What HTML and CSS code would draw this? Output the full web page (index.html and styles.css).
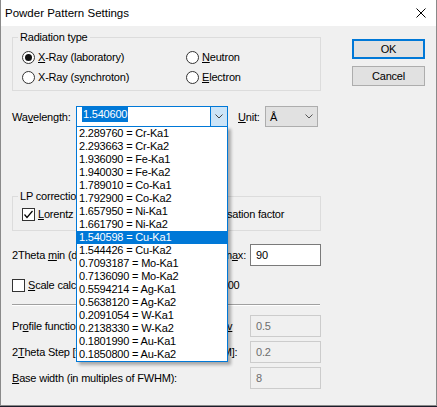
FILE: index.html
```html
<!DOCTYPE html>
<html lang="en">

<head>
    <meta charset="utf-8">
    <title>Powder Pattern Settings</title>
    <link rel="stylesheet" href="styles.css">
</head>

<body>
    <div class="dialog">
        <div class="titlebar">
            <span class="title">Powder Pattern Settings</span>
            <svg class="close" width="10" height="10" viewBox="0 0 10 10">
                <path d="M0.5 0.5 L9.5 9.5 M9.5 0.5 L0.5 9.5" stroke="#000" stroke-width="1" fill="none" />
            </svg>
        </div>

        <div class="client">
            <div class="main">
                <!-- radiation -->
                <fieldset class="group radiation">
                    <legend>Radiation type</legend>
                    <div class="options">
                        <label class="option"><span class="radio checked"></span><span><u>X</u>-Ray (laboratory)</span></label>
                        <label class="option"><span class="radio"></span><span><u>N</u>eutron</span></label>
                        <label class="option"><span class="radio"></span><span>X-Ray (s<u>y</u>nchroton)</span></label>
                        <label class="option"><span class="radio"></span><span><u>E</u>lectron</span></label>
                    </div>
                </fieldset>

                <!-- wavelength + unit -->
                <div class="wave">
                    <span class="wave-label">Wa<u>v</u>elength:</span>
                    <div class="combo focused">
                        <span class="combo-value"><span class="sel">1.540600</span></span>
                        <span class="combo-arrow">
                            <svg width="8" height="5" viewBox="0 0 8 5"><polyline points="0.5,0.5 4,4 7.5,0.5" fill="none" stroke="#444" stroke-width="1" /></svg>
                        </span>
                    </div>
                    <span class="unit-label"><u>U</u>nit:</span>
                    <div class="combo unit">
                        <span>Å</span>
                        <svg width="8" height="5" viewBox="0 0 8 5"><polyline points="0.5,0.5 4,4 7.5,0.5" fill="none" stroke="#555" stroke-width="1" /></svg>
                    </div>
                </div>

                <!-- lp correction -->
                <fieldset class="group lp">
                    <legend>LP correction</legend>
                    <div class="options">
                        <label class="option"><span class="check checked">
                                <svg width="11" height="11" viewBox="0 0 11 11"><polyline points="1.5,5.5 4,8.5 9.5,2" fill="none" stroke="#000" stroke-width="1.2" /></svg>
                            </span><span><u>L</u>orentz factor</span></label>
                        <label class="option"><span class="check checked">
                                <svg width="11" height="11" viewBox="0 0 11 11"><polyline points="1.5,5.5 4,8.5 9.5,2" fill="none" stroke="#000" stroke-width="1.2" /></svg>
                            </span><span>Polarisation factor</span></label>
                    </div>
                </fieldset>

                <div class="pair theta">
                    <div class="pair-label split">
                        <span>2Theta <u>m</u>in (deg):</span>
                        <span class="field small"></span>
                        <span class="max-label">2Theta m<u>a</u>x:</span>
                    </div>
                    <span class="field">90</span>
                </div>

                <label class="option scale"><span class="check"></span><span><u>S</u>cale calculated pattern to maximum of 1000</span></label>

                <hr class="sep">

                <div class="pair first">
                    <span class="pair-label">Pr<u>o</u>file function (pseudo-Voigt) Gauss fraction <u>v</u></span>
                    <span class="field disabled">0.5</span>
                </div>
                <div class="pair">
                    <span class="pair-label">2<u>T</u>heta Step [fraction of the peak width, FWHM]:</span>
                    <span class="field disabled">0.2</span>
                </div>
                <div class="pair">
                    <span class="pair-label"><u>B</u>ase width (in multiples of FWHM):</span>
                    <span class="field disabled">8</span>
                </div>
            </div>

            <div class="buttons">
                <button class="btn default">OK</button>
                <button class="btn">Cancel</button>
            </div>
        </div>

        <!-- open list of the wavelength combo -->
        <ul class="droplist">
            <li>2.289760 = Cr-Ka1</li>
            <li>2.293663 = Cr-Ka2</li>
            <li>1.936090 = Fe-Ka1</li>
            <li>1.940030 = Fe-Ka2</li>
            <li>1.789010 = Co-Ka1</li>
            <li>1.792900 = Co-Ka2</li>
            <li>1.657950 = Ni-Ka1</li>
            <li>1.661790 = Ni-Ka2</li>
            <li class="selected">1.540598 = Cu-Ka1</li>
            <li>1.544426 = Cu-Ka2</li>
            <li>0.7093187 = Mo-Ka1</li>
            <li>0.7136090 = Mo-Ka2</li>
            <li>0.5594214 = Ag-Ka1</li>
            <li>0.5638120 = Ag-Ka2</li>
            <li>0.2091054 = W-Ka1</li>
            <li>0.2138330 = W-Ka2</li>
            <li>0.1801990 = Au-Ka1</li>
            <li>0.1850800 = Au-Ka2</li>
        </ul>
    </div>
</body>

</html>
```

FILE: styles.css
```css
body {
    margin: 0;
    background-color: #1c1c2a;
    font-family: "Liberation Sans", Arial, sans-serif;
    font-size: 11px;
    letter-spacing: -0.2px;
    color: #000;
}

u {
    text-decoration: underline;
    text-underline-offset: 1px;
}

.dialog {
    position: relative;
    width: 435px;
    height: 405px;
    border: 1px solid #8a8a8a;
    border-top: none;
    background-color: #f0f0f0;
}

.titlebar {
    height: 26px;
    background-color: #fff;
    display: flex;
    align-items: center;
    justify-content: space-between;
    padding: 0 10px 0 4px;
}

.title {
    font-size: 11.5px;
    letter-spacing: 0;
}

.client {
    display: flex;
    padding-left: 11px;
}

.main {
    width: 309px;
    padding-top: 5px;
}

/* group boxes */
.group {
    margin: 0;
    border: 1px solid #dcdcdc;
    min-width: 0;
}

.group legend {
    padding: 0 2px;
    margin-left: -4px;
    line-height: 13px;
}

.radiation {
    padding: 7px 8px 6px 9px;
}

.lp {
    margin-top: 63px;
    padding: 5px 8px 9px 9px;
}

.options {
    display: grid;
    grid-template-columns: 164px auto;
    row-gap: 7px;
}

.lp .options {
    grid-template-columns: 162px auto;
}

.option {
    display: flex;
    align-items: center;
    gap: 3px;
    height: 13px;
    line-height: 13px;
    white-space: nowrap;
}

.radio {
    width: 13px;
    height: 13px;
    box-sizing: border-box;
    border: 1px solid #333;
    border-radius: 50%;
    background-color: #fff;
    display: flex;
    align-items: center;
    justify-content: center;
}

.radio.checked::after {
    content: "";
    width: 7px;
    height: 7px;
    border-radius: 50%;
    background-color: #111;
}

.check {
    width: 13px;
    height: 13px;
    box-sizing: border-box;
    border: 1px solid #333;
    background-color: #fff;
    display: flex;
    align-items: center;
    justify-content: center;
}

/* wavelength row */
.wave {
    display: flex;
    align-items: center;
    margin-top: 15px;
    height: 21px;
}

.wave-label {
    width: 64px;
}

.combo {
    box-sizing: border-box;
    height: 21px;
    display: flex;
}

.combo.focused {
    width: 152px;
    border: 1px solid #0078d7;
    background-color: #fff;
}

.combo-value {
    padding-left: 5px;
}

.sel {
    display: inline-block;
    height: 15px;
    line-height: 15px;
    padding: 0 1px;
    background-color: #0078d7;
    color: #fff;
}

.combo-arrow {
    margin-left: auto;
    width: 16px;
    border-left: 1px solid #0078d7;
    background-color: #cce4f7;
    display: flex;
    align-items: center;
    justify-content: center;
}

.unit-label {
    margin-left: 10px;
    width: 27px;
}

.combo.unit {
    width: 53px;
    border: 1px solid #adadad;
    background-color: #e1e1e1;
    align-items: center;
    justify-content: space-between;
    padding: 0 4px;
}

/* label + edit rows */
.pair {
    display: grid;
    grid-template-columns: 238px 71px;
    align-items: center;
    margin-top: 4px;
    white-space: nowrap;
}

.pair.first {
    margin-top: 9px;
}

.theta {
    margin-top: 13px;
}

.split {
    display: flex;
    align-items: center;
    justify-content: space-between;
    padding-right: 4px;
}

.field {
    box-sizing: border-box;
    height: 22px;
    line-height: 20px;
    padding-left: 5px;
    border: 1px solid #7a7a7a;
    background-color: #fff;
}

.field.small {
    width: 50px;
}

.field.disabled {
    border-color: #cccccc;
    background-color: #f0f0f0;
    color: #6d6d6d;
}

.scale {
    margin-top: 13px;
}

.sep {
    margin: 12px 0 0 0;
    width: 308px;
    height: 0;
    border: none;
    border-top: 1px solid #a0a0a0;
    border-bottom: 1px solid #fff;
}

/* buttons */
.buttons {
    margin-left: 31px;
    padding-top: 13px;
    display: flex;
    flex-direction: column;
    gap: 7px;
    width: 73px;
}

.btn {
    box-sizing: border-box;
    height: 20px;
    padding: 0;
    border: 1px solid #adadad;
    background-color: #e1e1e1;
    font-family: inherit;
    font-size: 11px;
    letter-spacing: inherit;
    color: #000;
}

.btn.default {
    border: 2px solid #0078d7;
}

/* dropped list */
.droplist {
    position: absolute;
    left: 75px;
    top: 126px;
    width: 152px;
    box-sizing: border-box;
    margin: 0;
    padding: 0;
    list-style: none;
    border: 1px solid #0078d7;
    background-color: #fff;
    box-shadow: 3px 3px 3px rgba(0, 0, 0, 0.3);
}

.droplist li {
    height: 13px;
    line-height: 13px;
    padding-left: 2px;
    white-space: nowrap;
}

.droplist .selected {
    background-color: #0078d7;
    color: #fff;
}
```
